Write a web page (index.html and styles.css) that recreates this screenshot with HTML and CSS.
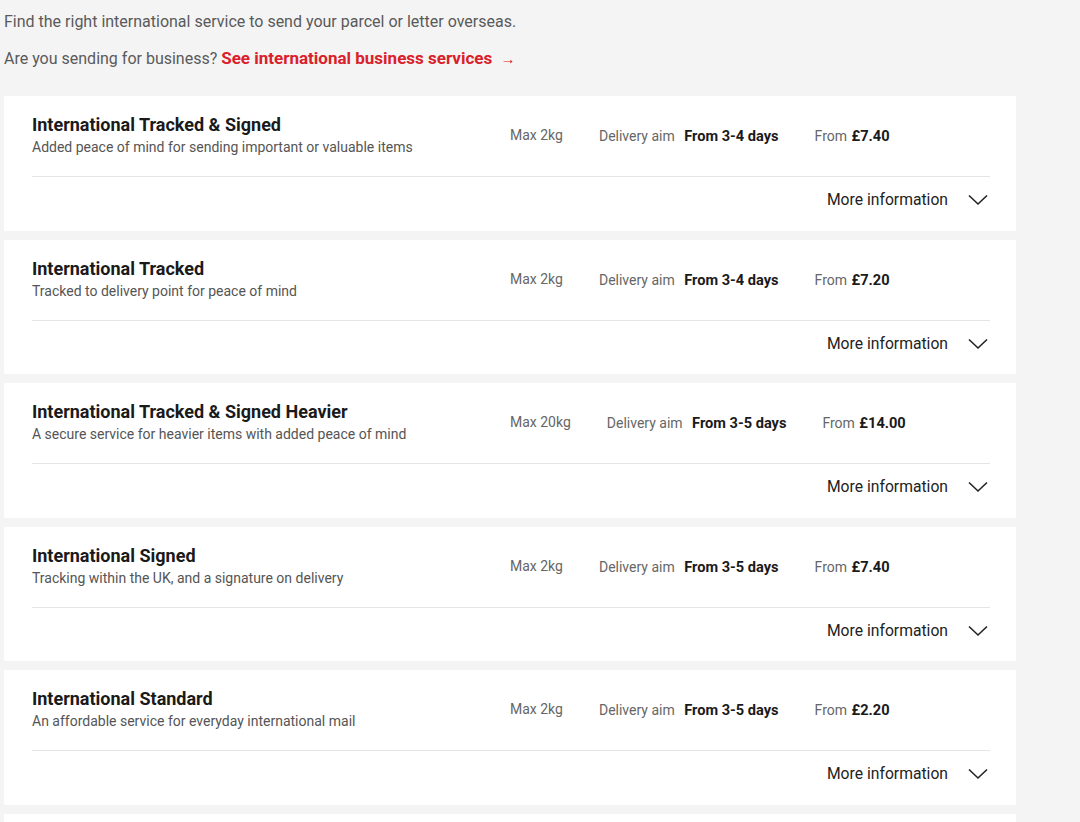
FILE: index.html
```html
<!DOCTYPE html>
<html lang="en">
<head>
<meta charset="utf-8">
<title>International services</title>
<link rel="stylesheet" href="styles.css">
</head>
<body>
<main class="page">
  <p class="intro">Find the right international service to send your parcel or letter overseas.</p>
  <p class="business">Are you sending for business? <a class="biz-link" href="#">See international business services <span class="arrow">→</span></a></p>

  <ul class="services">
    <li class="card">
      <div class="card-head">
        <div class="info">
          <h3 class="title">International Tracked &amp; Signed</h3>
          <p class="desc">Added peace of mind for sending important or valuable items</p>
        </div>
        <div class="metrics">
          <span class="max">Max 2kg</span>
          <span class="aim">Delivery aim <b>From 3-4 days</b></span>
          <span class="price">From <b>£7.40</b></span>
        </div>
      </div>
      <div class="card-foot">
        <span class="more">More information</span>
        <svg class="chev" width="20" height="12" viewBox="0 0 20 12"><path d="M1 1.5 L10 10 L19 1.5" fill="none" stroke="#222" stroke-width="1.6"/></svg>
      </div>
    </li>
    <li class="card">
      <div class="card-head">
        <div class="info">
          <h3 class="title">International Tracked</h3>
          <p class="desc">Tracked to delivery point for peace of mind</p>
        </div>
        <div class="metrics">
          <span class="max">Max 2kg</span>
          <span class="aim">Delivery aim <b>From 3-4 days</b></span>
          <span class="price">From <b>£7.20</b></span>
        </div>
      </div>
      <div class="card-foot">
        <span class="more">More information</span>
        <svg class="chev" width="20" height="12" viewBox="0 0 20 12"><path d="M1 1.5 L10 10 L19 1.5" fill="none" stroke="#222" stroke-width="1.6"/></svg>
      </div>
    </li>
    <li class="card">
      <div class="card-head">
        <div class="info">
          <h3 class="title">International Tracked &amp; Signed Heavier</h3>
          <p class="desc">A secure service for heavier items with added peace of mind</p>
        </div>
        <div class="metrics">
          <span class="max">Max 20kg</span>
          <span class="aim">Delivery aim <b>From 3-5 days</b></span>
          <span class="price">From <b>£14.00</b></span>
        </div>
      </div>
      <div class="card-foot">
        <span class="more">More information</span>
        <svg class="chev" width="20" height="12" viewBox="0 0 20 12"><path d="M1 1.5 L10 10 L19 1.5" fill="none" stroke="#222" stroke-width="1.6"/></svg>
      </div>
    </li>
    <li class="card">
      <div class="card-head">
        <div class="info">
          <h3 class="title">International Signed</h3>
          <p class="desc">Tracking within the UK, and a signature on delivery</p>
        </div>
        <div class="metrics">
          <span class="max">Max 2kg</span>
          <span class="aim">Delivery aim <b>From 3-5 days</b></span>
          <span class="price">From <b>£7.40</b></span>
        </div>
      </div>
      <div class="card-foot">
        <span class="more">More information</span>
        <svg class="chev" width="20" height="12" viewBox="0 0 20 12"><path d="M1 1.5 L10 10 L19 1.5" fill="none" stroke="#222" stroke-width="1.6"/></svg>
      </div>
    </li>
    <li class="card">
      <div class="card-head">
        <div class="info">
          <h3 class="title">International Standard</h3>
          <p class="desc">An affordable service for everyday international mail</p>
        </div>
        <div class="metrics">
          <span class="max">Max 2kg</span>
          <span class="aim">Delivery aim <b>From 3-5 days</b></span>
          <span class="price">From <b>£2.20</b></span>
        </div>
      </div>
      <div class="card-foot">
        <span class="more">More information</span>
        <svg class="chev" width="20" height="12" viewBox="0 0 20 12"><path d="M1 1.5 L10 10 L19 1.5" fill="none" stroke="#222" stroke-width="1.6"/></svg>
      </div>
    </li>
    <li class="card card-next"></li>
  </ul>
</main>
</body>
</html>
```

FILE: styles.css
```css
html, body {
  margin: 0;
  padding: 0;
  background: #f4f4f4;
}
body {
  font-family: Roboto, "Liberation Sans", sans-serif;
  color: #222;
}
.page {
  padding: 0 64px 0 4px;
}
.intro {
  margin: 0;
  padding-top: 11px;
  font-size: 16px;
  line-height: 22px;
  color: #5a5a5a;
}
.business {
  margin: 14px 0 0;
  font-size: 16px;
  line-height: 22px;
  color: #5a5a5a;
}
.biz-link {
  color: #da202a;
  font-weight: 700;
  font-size: 17px;
  text-decoration: none;
}
.arrow {
  font-weight: 400;
  font-size: 15px;
  margin-left: 4px;
}
.services {
  list-style: none;
  margin: 26px 0 0;
  padding: 0;
  display: flex;
  flex-direction: column;
  gap: 9px;
}
.card {
  background: #fff;
  padding: 0 26px 0 28px;
}
.card-next {
  height: 40px;
}
.card-head {
  display: flex;
  align-items: center;
  padding: 17px 0 19px;
  border-bottom: 1px solid #e4e4e4;
}
.info {
  width: 478px;
  flex: none;
}
.title {
  margin: 0;
  font-size: 18px;
  line-height: 23px;
  font-weight: 700;
  color: #1a1a1a;
}
.desc {
  margin: 1px 0 0;
  font-size: 14px;
  line-height: 20px;
  color: #555;
}
.metrics {
  display: flex;
  gap: 36px;
  padding-top: 2px;
  font-size: 14px;
  color: #666;
}
.metrics b {
  color: #1a1a1a;
  font-weight: 700;
  font-size: 14.6px;
  margin-left: 6px;
}
.price b {
  margin-left: 1px;
}
.card-foot {
  display: flex;
  justify-content: flex-end;
  align-items: center;
  gap: 20px;
  padding: 11px 2px 18.6px 0;
}
.more {
  font-size: 15.7px;
  line-height: 24px;
  color: #222;
}
.chev {
  display: block;
}
```
